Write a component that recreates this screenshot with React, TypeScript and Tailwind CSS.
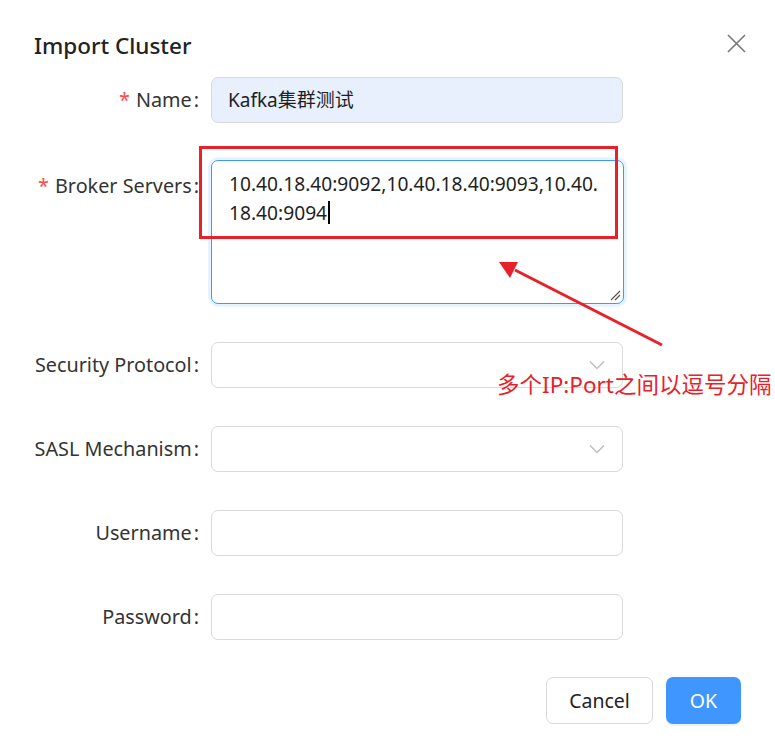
import React from "react";

const font = { fontFamily: '"Noto Sans", "Noto Sans CJK SC", sans-serif' };

type Field = {
    label: string;
    kind: "input" | "select";
};

const fieldsAfter: Field[] = [
    {label: "Security Protocol", kind: "select"},
    {label: "SASL Mechanism", kind: "select"},
    {label: "Username", kind: "input"},
    {label: "Password", kind: "input"},
];

const Label = ({text, required}: { text: string; required?: boolean }) => (
    <div className="w-[165px] shrink-0 flex justify-end items-center h-[46px] text-[19.8px] text-[#333] whitespace-nowrap">
        {required && <span className="text-[#ff4d4f] mr-[6px]">*</span>}
        <span>{text}</span>
        <span className="ml-[2px]">:</span>
    </div>
);

const Chevron = () => (
    <svg width="16" height="10" viewBox="0 0 16 10" className="absolute right-[17px] top-[17px]">
        <path d="M1 1.5 L8 8.5 L15 1.5" fill="none" stroke="#bfbfbf" strokeWidth="1.5"/>
    </svg>
);

export default function App() {
    return (
        <div style={font} className="relative w-[775px] h-[752px] bg-white overflow-hidden">
            {/* header */}
            <div className="flex items-center justify-between pl-[34px] pr-[29px] pt-[31px]">
                <h1 className="text-[22.5px] leading-[30px] font-medium text-[#222]">Import Cluster</h1>
                <svg width="19" height="19" viewBox="0 0 19 19" className="-mt-[6px]">
                    <path d="M1 1 L18 18 M18 1 L1 18" stroke="#777" strokeWidth="1.6"/>
                </svg>
            </div>

            {/* form */}
            <div className="pl-[34px] pt-[16px] flex flex-col">
                <div className="flex gap-[12px] items-start">
                    <Label text="Name" required/>
                    <div className="w-[412px] h-[46px] rounded-[7px] border border-[#d9d9d9] bg-[#e8f0fe] flex items-center px-[16px] text-[19px] text-[#1f1f1f]">
                        Kafka集群测试
                    </div>
                </div>

                <div className="flex gap-[12px] items-start mt-[37px]">
                    <div className="pt-[3px]">
                        <Label text="Broker Servers" required/>
                    </div>
                    <div className="relative w-[413px] h-[144px] rounded-[7px] border border-[#4096ff] ring-[3px] ring-[#e6f4ff] bg-white px-[17px] pt-[8px] text-[19.2px] leading-[29px] text-[#1f1f1f]">
                        <div>10.40.18.40:9092,10.40.18.40:9093,10.40.</div>
                        <div className="flex items-center">
                            18.40:9094<span className="inline-block w-[2px] h-[23px] bg-black ml-[1px]"/>
                        </div>
                        <svg width="12" height="12" viewBox="0 0 12 12" className="absolute right-[2px] bottom-[2px]">
                            <path d="M11 2 L2 11 M11 6 L6 11" stroke="#555" strokeWidth="1.2"/>
                        </svg>
                    </div>
                </div>

                {fieldsAfter.map((f, i) => (
                    <div key={i} className="flex gap-[12px] items-start mt-[38px]">
                        <Label text={f.label}/>
                        <div className="relative w-[412px] h-[46px] rounded-[7px] border border-[#d9d9d9] bg-white">
                            {f.kind === "select" && <Chevron/>}
                        </div>
                    </div>
                ))}
            </div>

            {/* footer */}
            <div className="flex justify-end gap-[13px] pr-[34px] mt-[37px]">
                <button className="w-[107px] h-[47px] rounded-[7px] border border-[#d9d9d9] bg-white text-[19.5px] text-[#222]">
                    Cancel
                </button>
                <button className="w-[75px] h-[47px] rounded-[7px] bg-[#4096ff] text-white text-[19.5px] shadow-[0_2px_0_rgba(5,145,255,0.1)]">
                    OK
                </button>
            </div>

            {/* annotation overlay */}
            <div className="absolute left-[199px] top-[146px] w-[419px] h-[93px] border-[3px] border-[#e8202a] pointer-events-none"/>
            <svg className="absolute left-0 top-0 pointer-events-none" width="775" height="752">
                <line x1="662" y1="345" x2="515" y2="270" stroke="#e8202a" strokeWidth="3"/>
                <polygon points="499,262 518,262 510,278" fill="#e8202a"/>
            </svg>
            <div className="absolute left-[497px] top-[369px] text-[22.5px] leading-[32px] text-[#e8202a] whitespace-nowrap">
                多个IP:Port之间以逗号分隔
            </div>
        </div>
    );
}
